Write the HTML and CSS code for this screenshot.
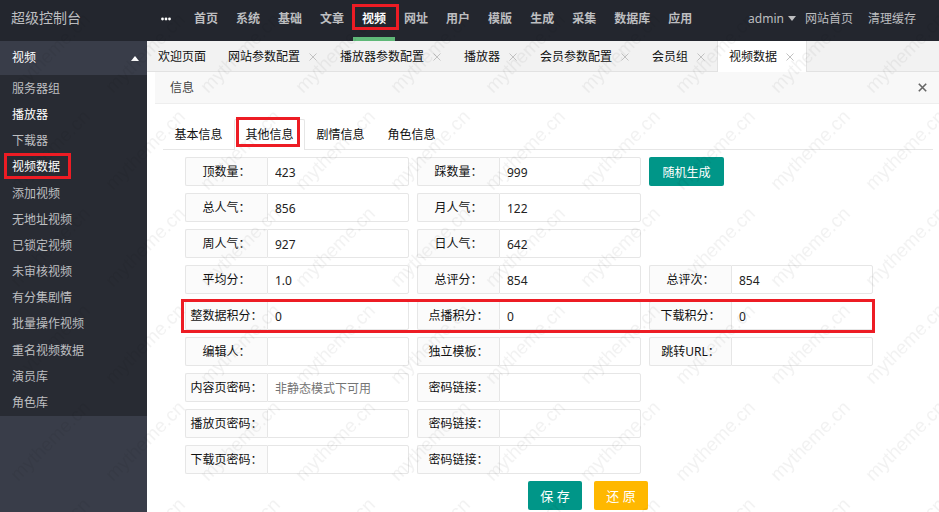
FILE: index.html
```html
<!DOCTYPE html>
<html lang="zh-CN">
<head>
    <meta charset="UTF-8">
    <meta name="viewport" content="width=device-width, initial-scale=1.0">
    <title>超级控制台</title>
    <link rel="stylesheet" href="styles.css">
</head>
<body>
    <header class="header">
        <div class="logo">超级控制台</div>
        <nav class="nav">
            <a href="#" class="more" aria-label="更多">
                <svg width="10" height="4" viewBox="0 0 10 4"><circle cx="1.5" cy="2" r="1.4"/><circle cx="5" cy="2" r="1.4"/><circle cx="8.5" cy="2" r="1.4"/></svg>
            </a>
            <a href="#">首页</a>
            <a href="#">系统</a>
            <a href="#">基础</a>
            <a href="#">文章</a>
            <a href="#" class="active">视频<span class="mark mark-nav"></span></a>
            <a href="#">网址</a>
            <a href="#">用户</a>
            <a href="#">模版</a>
            <a href="#">生成</a>
            <a href="#">采集</a>
            <a href="#">数据库</a>
            <a href="#">应用</a>
        </nav>
        <div class="user-nav">
            <a href="#" class="user">admin<span class="caret-down"></span></a>
            <a href="#">网站首页</a>
            <a href="#">清理缓存</a>
        </div>
    </header>

    <div class="layout">
        <aside class="side">
            <a href="#" class="side-title">视频<span class="caret-up"></span></a>
            <div class="side-menu">
                <a href="#">服务器组</a>
                <a href="#" class="on">播放器</a>
                <a href="#">下载器</a>
                <a href="#" class="on">视频数据<span class="mark mark-side"></span></a>
                <a href="#">添加视频</a>
                <a href="#">无地址视频</a>
                <a href="#">已锁定视频</a>
                <a href="#">未审核视频</a>
                <a href="#">有分集剧情</a>
                <a href="#">批量操作视频</a>
                <a href="#">重名视频数据</a>
                <a href="#">演员库</a>
                <a href="#">角色库</a>
            </div>
        </aside>

        <main class="main">
            <div class="page-tabs">
                <div class="page-tab"><a href="#">欢迎页面</a></div>
                <div class="page-tab"><a href="#">网站参数配置</a><button type="button" class="tab-close" aria-label="关闭"><svg width="8" height="8" viewBox="0 0 8 8"><path d="M0.5 0.5L7.5 7.5M7.5 0.5L0.5 7.5"/></svg></button></div>
                <div class="page-tab"><a href="#">播放器参数配置</a><button type="button" class="tab-close" aria-label="关闭"><svg width="8" height="8" viewBox="0 0 8 8"><path d="M0.5 0.5L7.5 7.5M7.5 0.5L0.5 7.5"/></svg></button></div>
                <div class="page-tab"><a href="#">播放器</a><button type="button" class="tab-close" aria-label="关闭"><svg width="8" height="8" viewBox="0 0 8 8"><path d="M0.5 0.5L7.5 7.5M7.5 0.5L0.5 7.5"/></svg></button></div>
                <div class="page-tab"><a href="#">会员参数配置</a><button type="button" class="tab-close" aria-label="关闭"><svg width="8" height="8" viewBox="0 0 8 8"><path d="M0.5 0.5L7.5 7.5M7.5 0.5L0.5 7.5"/></svg></button></div>
                <div class="page-tab"><a href="#">会员组</a><button type="button" class="tab-close" aria-label="关闭"><svg width="8" height="8" viewBox="0 0 8 8"><path d="M0.5 0.5L7.5 7.5M7.5 0.5L0.5 7.5"/></svg></button></div>
                <div class="page-tab current"><a href="#">视频数据</a><button type="button" class="tab-close" aria-label="关闭"><svg width="8" height="8" viewBox="0 0 8 8"><path d="M0.5 0.5L7.5 7.5M7.5 0.5L0.5 7.5"/></svg></button></div>
            </div>

            <section class="panel">
                <div class="panel-title">
                    <span>信息</span>
                    <button type="button" class="panel-close" aria-label="关闭"><svg width="9" height="9" viewBox="0 0 9 9"><path d="M0.8 0.8L8.2 8.2M8.2 0.8L0.8 8.2" stroke-width="1.6"/></svg></button>
                </div>

                <div class="panel-body">
                    <div class="form-tabs">
                        <a href="#">基本信息</a>
                        <a href="#" class="active">其他信息<span class="mark mark-tab"></span></a>
                        <a href="#">剧情信息</a>
                        <a href="#">角色信息</a>
                    </div>

                    <form class="form" id="vod-form">
                        <div class="form-row">
                            <div class="field"><label for="vod_up">顶数量：</label><input type="text" id="vod_up" value="423"></div>
                            <div class="field"><label for="vod_down">踩数量：</label><input type="text" id="vod_down" value="999"></div>
                            <button type="button" class="btn">随机生成</button>
                        </div>
                        <div class="form-row">
                            <div class="field"><label for="hits">总人气：</label><input type="text" id="hits" value="856"></div>
                            <div class="field"><label for="hits_month">月人气：</label><input type="text" id="hits_month" value="122"></div>
                        </div>
                        <div class="form-row">
                            <div class="field"><label for="hits_week">周人气：</label><input type="text" id="hits_week" value="927"></div>
                            <div class="field"><label for="hits_day">日人气：</label><input type="text" id="hits_day" value="642"></div>
                        </div>
                        <div class="form-row">
                            <div class="field"><label for="score">平均分：</label><input type="text" id="score" value="1.0"></div>
                            <div class="field"><label for="score_all">总评分：</label><input type="text" id="score_all" value="854"></div>
                            <div class="field"><label for="score_num">总评次：</label><input type="text" id="score_num" value="854"></div>
                        </div>
                        <div class="form-row">
                            <div class="field"><label for="points">整数据积分：</label><input type="text" id="points" value="0"></div>
                            <div class="field"><label for="points_play">点播积分：</label><input type="text" id="points_play" value="0"></div>
                            <div class="field"><label for="points_down">下载积分：</label><input type="text" id="points_down" value="0"></div>
                            <span class="mark mark-row"></span>
                        </div>
                        <div class="form-row">
                            <div class="field"><label for="author">编辑人：</label><input type="text" id="author"></div>
                            <div class="field"><label for="tpl">独立模板：</label><input type="text" id="tpl"></div>
                            <div class="field"><label for="jumpurl">跳转URL：</label><input type="text" id="jumpurl"></div>
                        </div>
                        <div class="form-row">
                            <div class="field"><label for="pwd">内容页密码：</label><input type="text" id="pwd" placeholder="非静态模式下可用"></div>
                            <div class="field"><label for="pwd_url">密码链接：</label><input type="text" id="pwd_url"></div>
                        </div>
                        <div class="form-row">
                            <div class="field"><label for="pwd_play">播放页密码：</label><input type="text" id="pwd_play"></div>
                            <div class="field"><label for="pwd_play_url">密码链接：</label><input type="text" id="pwd_play_url"></div>
                        </div>
                        <div class="form-row">
                            <div class="field"><label for="pwd_down">下载页密码：</label><input type="text" id="pwd_down"></div>
                            <div class="field"><label for="pwd_down_url">密码链接：</label><input type="text" id="pwd_down_url"></div>
                        </div>
                    </form>

                    <div class="form-actions">
                        <button type="submit" form="vod-form" class="btn btn-large">保 存</button>
                        <button type="reset" form="vod-form" class="btn btn-large btn-warm">还 原</button>
                    </div>
                </div>
            </section>
        </main>
    </div>

    <svg class="watermark" aria-hidden="true">
        <defs>
            <pattern id="wm" x="1" y="0" width="95" height="97" patternUnits="userSpaceOnUse">
                <text x="17" y="94" transform="rotate(-45 17 94)">mytheme.cn</text>
            </pattern>
        </defs>
        <rect width="100%" height="100%" fill="url(#wm)"/>
    </svg>
</body>
</html>
```

FILE: styles.css
```css
* {
    box-sizing: border-box;
}

body {
    margin: 0;
    min-height: 100vh;
    display: flex;
    flex-direction: column;
    position: relative;
    overflow: hidden;
    font-family: "Noto Sans", "Noto Sans CJK SC", sans-serif;
    font-size: 12px;
    line-height: 18px;
    color: #111;
    background-color: #fff;
}

a {
    color: inherit;
    text-decoration: none;
}

button, input {
    font-family: inherit;
    font-size: 12px;
}

button {
    padding: 0;
    border: none;
    background: none;
    cursor: pointer;
}

svg {
    display: block;
}

/* header */
.header {
    display: flex;
    height: 41px;
    padding-right: 23px;
    line-height: 37px;
    color: #bdbec0;
    background-color: #23262e;
}

.logo {
    width: 152px;
    padding-left: 11px;
    font-size: 14px;
    line-height: 36px;
}

.nav {
    display: flex;
    font-weight: bold;
}

.nav a {
    position: relative;
    padding: 0 9px;
}

.nav .more {
    display: flex;
    align-items: center;
    width: 33px;
    height: 37px;
    fill: #fff;
}

.nav .active {
    color: #fff;
    border-bottom: 4px solid #5fb878;
}

.user-nav {
    display: flex;
    gap: 15px;
    margin-left: auto;
}

.user {
    display: flex;
    align-items: center;
    height: 37px;
    margin-right: -6px;
}

.caret-down {
    margin-left: 4px;
    border: 4px solid transparent;
    border-top: 5px solid #bdbec0;
    border-bottom: 0;
}

/* layout */
.layout {
    display: flex;
    flex: 1;
}

.side {
    width: 147px;
    flex-shrink: 0;
    color: #bebfc1;
    background-color: #393d49;
}

.side-title {
    display: flex;
    align-items: center;
    justify-content: space-between;
    height: 34px;
    padding: 0 8px 0 12px;
    color: #fff;
}

.caret-up {
    border: 4px solid transparent;
    border-top: 0;
    border-bottom: 5px solid #fff;
}

.side-menu {
    display: grid;
    grid-auto-rows: 1fr;
    min-height: 341px;
    padding-top: 1px;
    background-color: #282b33;
}

.side-menu a {
    position: relative;
    padding-left: 12px;
    line-height: 26px;
}

.side-menu .on {
    color: #fff;
}

.main {
    flex: 1;
    min-width: 0;
}

/* page tabs */
.page-tabs {
    display: flex;
    height: 31px;
    border-bottom: 1px solid #e2e2e2;
    background-color: #f2f2f2;
}

.page-tab {
    display: flex;
    align-items: center;
    height: 31px;
    padding: 0 12px 0 11px;
    white-space: nowrap;
}

.page-tab:first-child {
    padding-right: 11px;
}

.page-tab.current {
    border-left: 1px solid #e2e2e2;
    border-right: 1px solid #e2e2e2;
    background-color: #fff;
}

.tab-close {
    margin-left: 9px;
    stroke: #c2c2c2;
    fill: none;
}

/* panel */
.panel {
    margin-left: 8px;
}

.panel-title {
    display: flex;
    align-items: center;
    justify-content: space-between;
    height: 32px;
    padding: 0 12px 0 15px;
    color: #444;
    border-bottom: 1px solid #eee;
    background-color: #f8f8f8;
}

.panel-close {
    stroke: #666;
}

.panel-body {
    padding: 15px 6px 0 8px;
}

.form-tabs {
    display: flex;
    height: 31px;
    border-bottom: 1px solid #e6e6e6;
}

.form-tabs a {
    position: relative;
    min-width: 71px;
    height: 31px;
    padding: 0 10px;
    border: 1px solid transparent;
    border-bottom: 0;
    line-height: 30px;
    text-align: center;
}

.form-tabs .active {
    border-color: #e6e6e6;
    border-radius: 2px 2px 0 0;
    background-color: #fff;
}

/* form */
.form {
    display: flex;
    flex-direction: column;
    gap: 7px;
    padding: 7px 0 7px 22px;
}

.form-row {
    position: relative;
    display: grid;
    grid-template-columns: repeat(3, minmax(0, 224px));
    column-gap: 8px;
    width: fit-content;
}

.field {
    display: flex;
}

.field label {
    flex: 0 0 82px;
    height: 29px;
    border: 1px solid #e6e6e6;
    border-right: 0;
    border-radius: 2px 0 0 2px;
    line-height: 27px;
    text-align: center;
    white-space: nowrap;
    background-color: #fbfbfb;
}

.field input {
    flex: 1;
    min-width: 0;
    height: 29px;
    padding: 2px 7px 0;
    border: 1px solid #e6e6e6;
    border-radius: 0 2px 2px 0;
    color: #222;
    background-color: #fff;
}

.field input::placeholder {
    color: #757575;
}

.btn {
    justify-self: start;
    min-width: 75px;
    height: 29px;
    padding: 0 12px;
    border-radius: 2px;
    color: #fff;
    background-color: #009688;
}

.btn-large {
    min-width: 54px;
    font-size: 13px;
}

.btn-warm {
    background-color: #ffb800;
}

.form-actions {
    display: flex;
    justify-content: center;
    gap: 12px;
    padding-left: 80px;
}

/* red highlight frames */
.mark {
    position: absolute;
    z-index: 2;
    border: 3px solid #ed1c24;
    pointer-events: none;
}

.mark-nav {
    top: 4px;
    left: -1px;
    right: -4px;
    height: 26px;
}

.mark-side {
    top: -1px;
    left: 4px;
    width: 67px;
    height: 26px;
}

.mark-tab {
    top: -3px;
    left: 1px;
    right: 4px;
    height: 30px;
}

.mark-row {
    top: -2px;
    bottom: -3px;
    left: -4px;
    right: -2px;
}

.watermark {
    position: absolute;
    top: 0;
    left: 0;
    width: 100%;
    height: 100%;
    pointer-events: none;
    font-family: "Liberation Sans", Arial, sans-serif;
    font-size: 19px;
    fill: rgba(0, 0, 0, 0.05);
}
```
